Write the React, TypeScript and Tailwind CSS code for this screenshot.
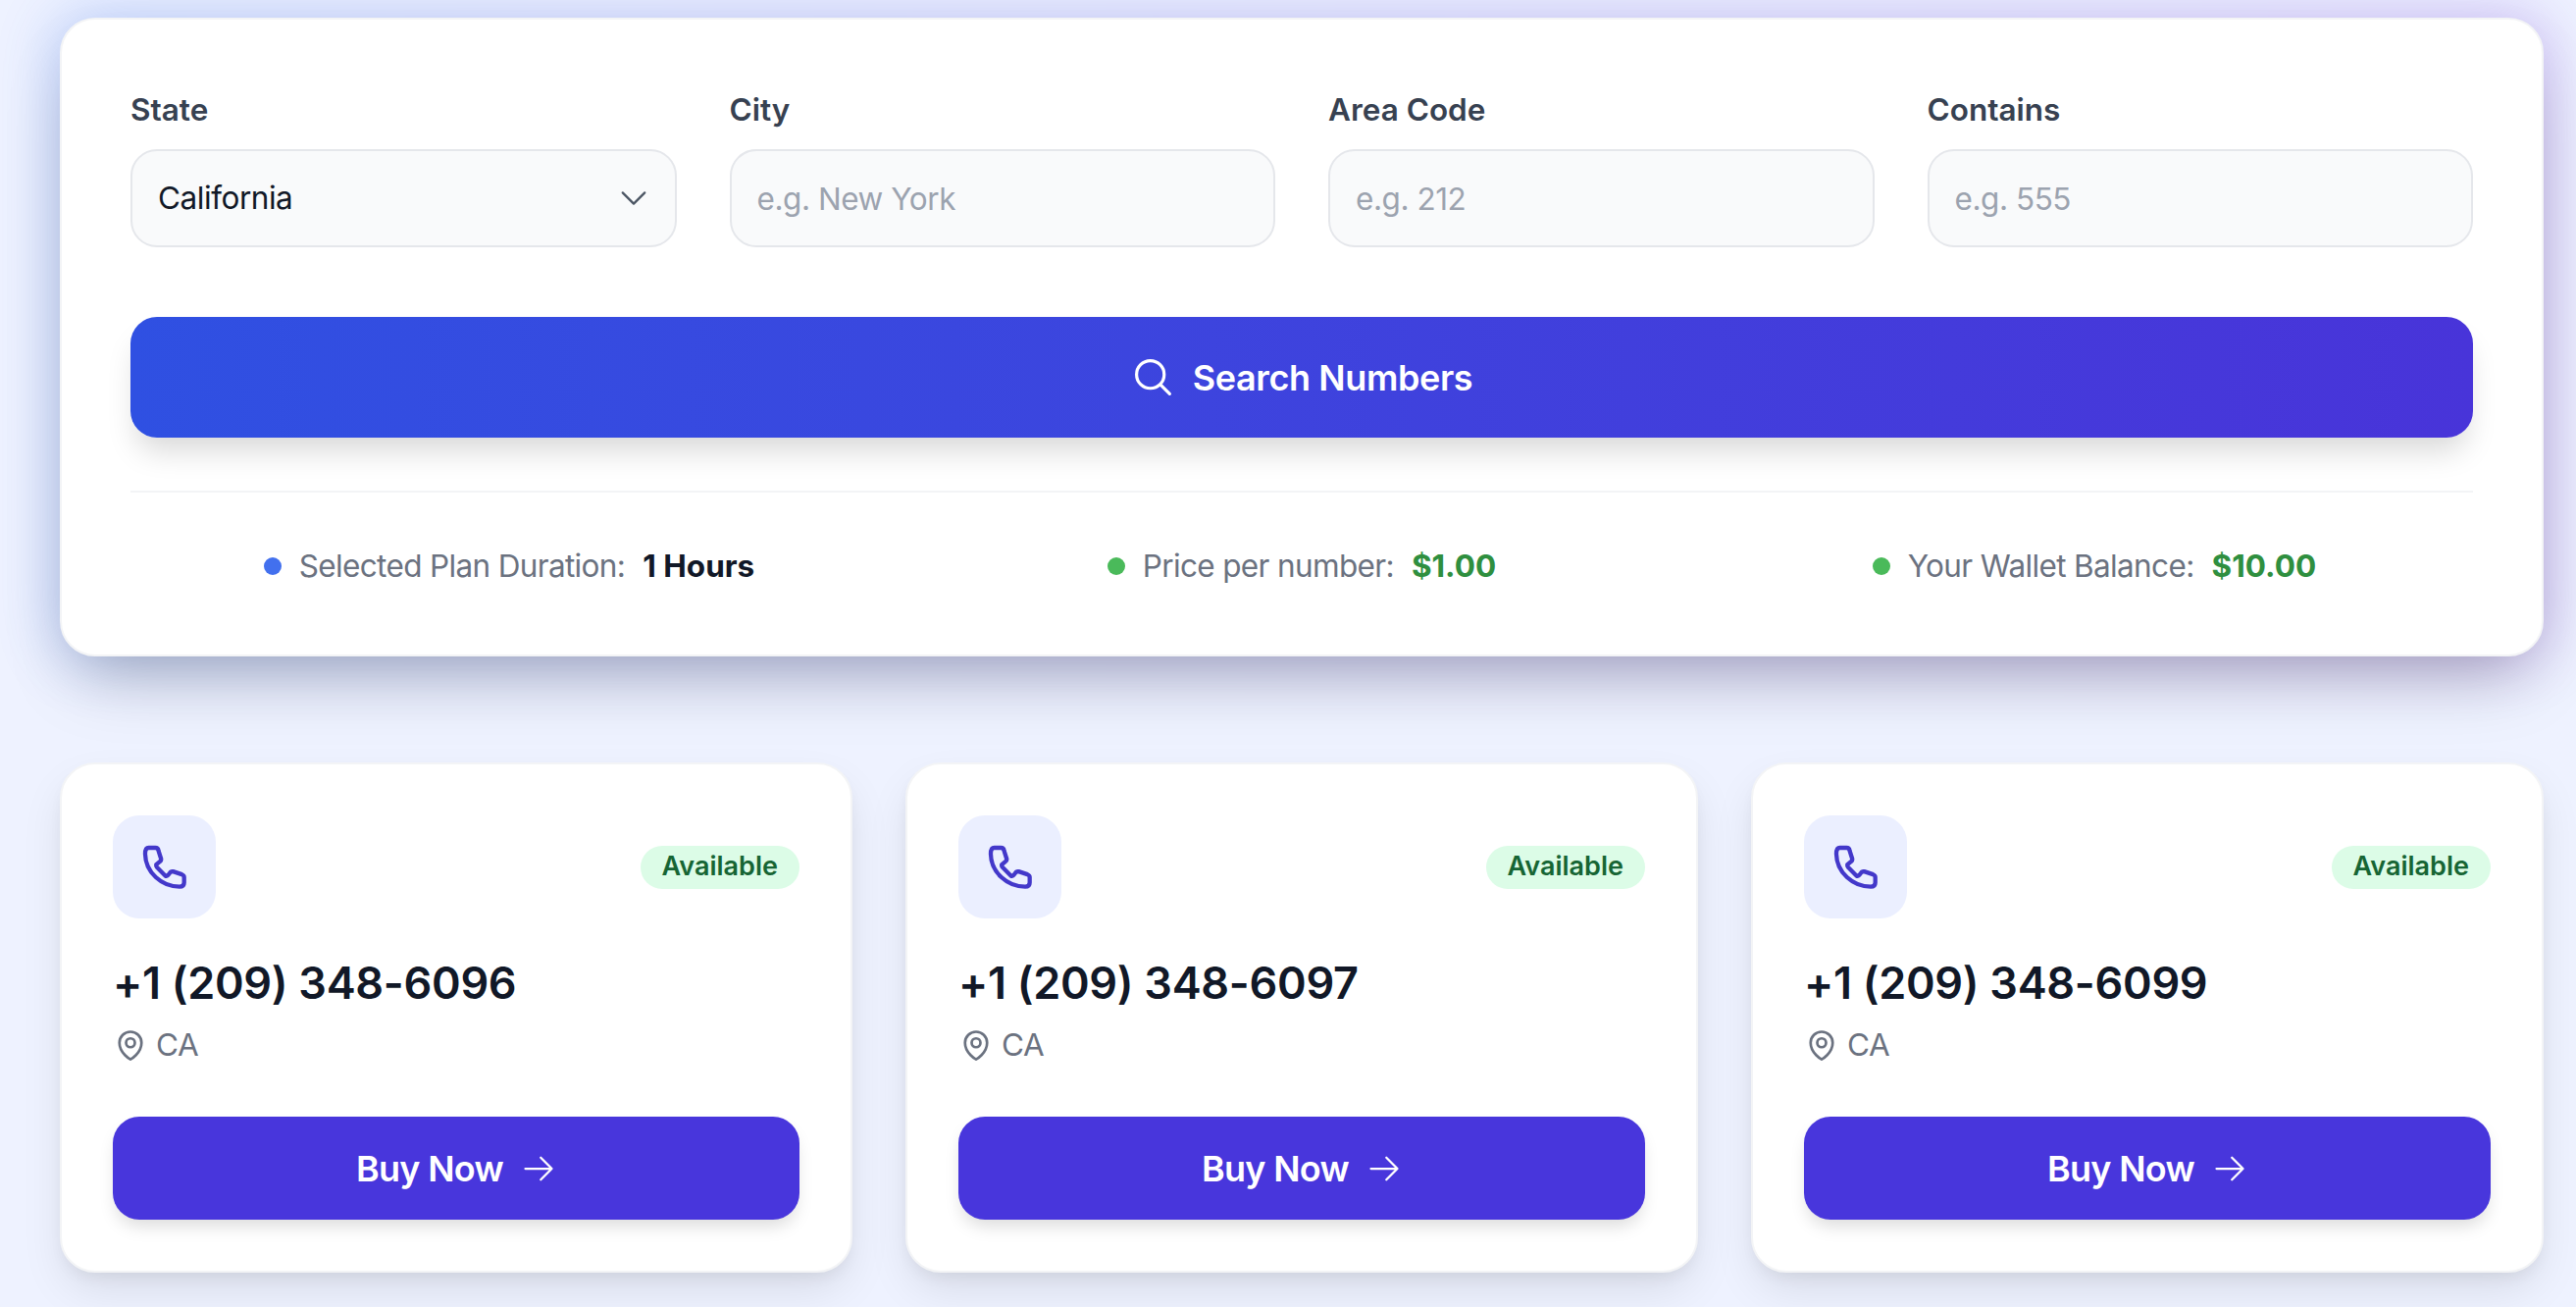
import { HiOutlineArrowRight, HiOutlineChevronDown, HiOutlineMagnifyingGlass, HiOutlineMapPin } from 'react-icons/hi2';

const numbers = ['+1 (209) 348-6096', '+1 (209) 348-6097', '+1 (209) 348-6099'];

function PhoneIcon() {
  return (
    <svg viewBox="0 0 136 136" fill="none" stroke="currentColor" strokeWidth="13" strokeLinecap="round" strokeLinejoin="round" className="w-[45px] h-[45px] text-[#4338ca]">
      <path d="M20 9h20q9 0 10 9l8 25q1 6-4 9l-11 9q-1 5 2 8l26 26q4 3 9-2l7-9q4-3 8-2l27 9q7 3 7 9v16q0 13-14 13C60 129 10 85 9 28q0-19 11-19z" />
    </svg>
  );
}

function Field({ label, placeholder }: { label: string; placeholder: string }) {
  return (
    <div className="flex flex-col gap-[18px]">
      <label className="text-[31.5px] leading-[45px] font-semibold text-[#374151]">{label}</label>
      <input
        readOnly
        placeholder={placeholder}
        className="h-[100px] w-full rounded-[27px] border-2 border-[#e5e7eb] bg-[#f9fafb] px-[26px] text-[31.5px] tracking-[-0.45px] text-[#111827] placeholder:text-[#9ca3af] outline-none"
      />
    </div>
  );
}

function Stat({ label, value, dot, valueColor }: { label: string; value: string; dot: string; valueColor: string }) {
  return (
    <div className="flex items-center justify-center gap-[18px] text-[31.5px] leading-[45px]">
      <span className={`w-[18px] h-[18px] rounded-full ${dot}`} />
      <span className="text-[#6b7280] tracking-[-0.65px]">{label}</span>
      <span className={`font-bold ${valueColor}`}>{value}</span>
    </div>
  );
}

function NumberCard({ phone }: { phone: string }) {
  return (
    <div className="rounded-[36px] border-2 border-[#f3f4f6] bg-white p-[52px] shadow-[0_20px_45px_-5px_rgba(0,0,0,0.1),0_8px_16px_-4px_rgba(0,0,0,0.06)]">
      <div className="flex items-center justify-between">
        <div className="flex w-[105px] h-[105px] items-center justify-center rounded-[27px] bg-[#ebefff]">
          <PhoneIcon />
        </div>
        <span className="flex h-[44px] items-center rounded-full bg-[#dcfce7] px-[22px] text-[27px] font-semibold text-[#166534]">Available</span>
      </div>
      <div className="mt-[34px] text-[45px] leading-[63px] font-semibold tracking-[-0.3px] text-[#111827]">{phone}</div>
      <div className="mt-[9px] flex items-center gap-[8px] text-[31.5px] leading-[45px] tracking-[-0.5px] text-[#6b7280]">
        <HiOutlineMapPin className="w-[36px] h-[36px]" strokeWidth={1.8} />
        <span>CA</span>
      </div>
      <button className="mt-[51px] flex h-[105px] w-full items-center justify-center gap-[18px] rounded-[27px] bg-[#4836dc] text-[36px] font-semibold tracking-[-0.7px] text-white shadow-[0_10px_18px_-4px_rgba(0,0,0,0.15)]">
        Buy Now
        <HiOutlineArrowRight className="w-[36px] h-[36px]" />
      </button>
    </div>
  );
}

export default function App() {
  return (
    <div className="h-screen overflow-hidden bg-[#eef2ff] pl-[61px] pr-[33px] pt-[18px] font-['Inter',sans-serif]">
      <div className="relative">
        {/* coloured glow behind the card */}
        <div className="absolute -inset-[6px] rounded-[40px] bg-gradient-to-r from-[#2563eb] to-[#6d28d9] opacity-25 blur-[30px]" />
        <div className="relative rounded-[36px] border-2 border-[#f3f4f6] bg-white px-[70px] pt-[69px] pb-[68px] shadow-[0_36px_70px_-20px_rgba(0,0,0,0.25)]">
          <div className="grid grid-cols-4 gap-[54px]">
            <div className="flex flex-col gap-[18px]">
              <label className="text-[31.5px] leading-[45px] font-semibold text-[#374151]">State</label>
              <div className="relative">
                <select className="block h-[100px] w-full appearance-none rounded-[27px] border-2 border-[#e5e7eb] bg-[#f9fafb] px-[26px] text-[31.5px] tracking-[-0.45px] text-[#111827] outline-none">
                  <option>California</option>
                </select>
                <HiOutlineChevronDown className="absolute right-[26px] top-[32px] w-[36px] h-[36px] text-[#4b5563]" />
              </div>
            </div>
            <Field label="City" placeholder="e.g. New York" />
            <Field label="Area Code" placeholder="e.g. 212" />
            <Field label="Contains" placeholder="e.g. 555" />
          </div>

          <button className="mt-[71px] flex h-[123px] w-full items-center justify-center gap-[18px] rounded-[27px] bg-gradient-to-r from-[#2f50e2] to-[#4834d9] text-[36px] font-semibold tracking-[-0.4px] text-white shadow-[0_20px_30px_-6px_rgba(0,0,0,0.15)]">
            <HiOutlineMagnifyingGlass className="w-[45px] h-[45px]" strokeWidth={1.7} />
            Search Numbers
          </button>

          <div className="mt-[54px] border-t-2 border-[#f3f4f6] pt-[52px]">
            <div className="grid grid-cols-3 gap-[36px]">
              <Stat label="Selected Plan Duration:" value="1 Hours" dot="bg-[#4270ee]" valueColor="text-[#111827]" />
              <Stat label="Price per number:" value="$1.00" dot="bg-[#4aba5a]" valueColor="text-[#2f8f3f]" />
              <Stat label="Your Wallet Balance:" value="$10.00" dot="bg-[#4aba5a]" valueColor="text-[#2f8f3f]" />
            </div>
          </div>
        </div>
      </div>

      <div className="mt-[108px] grid grid-cols-3 gap-[54px]">
        {numbers.map((n) => (
          <NumberCard key={n} phone={n} />
        ))}
      </div>
    </div>
  );
}
